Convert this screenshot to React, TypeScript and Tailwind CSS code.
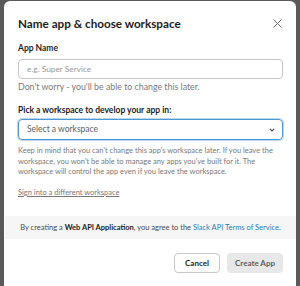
export default function App() {
  return (
    <div className="h-[286px] w-[300px] overflow-hidden bg-[#5a5a5a] pl-[4px] pr-[4px] pt-px font-['Lato','Noto_Sans',sans-serif] text-[#1d1c1d]">
      <div className="h-[320px] rounded-t-[6px] bg-white">
        {/* Header */}
        <div className="flex items-center justify-between pl-[14px] pr-[14px] pt-[12px]">
          <h1 className="text-[11.7px] font-bold leading-[20px]">Name app &amp; choose workspace</h1>
          <button className="text-[#6b6b6b]">
            <svg width="9" height="9" viewBox="0 0 9 9" fill="none" stroke="currentColor" strokeWidth="1">
              <path d="M0.5 0.5l8 8M8.5 0.5l-8 8" />
            </svg>
          </button>
        </div>

        {/* Body */}
        <div className="pl-[14px] pr-[13px]">
          <label className="mt-[7px] block text-[8.5px] font-bold leading-[16px]">App Name</label>
          <input
            placeholder="e.g. Super Service"
            className="mt-[3px] block h-[20px] w-full rounded-[4px] border border-[#c6c6c6] px-[8px] text-[8.3px] placeholder:text-[#9a9a9a] outline-none"
          />
          <p className="mt-[2px] text-[8.8px] leading-[12px] text-[#7a797a]">Don't worry - you'll be able to change this later.</p>

          <label className="mt-[9px] block text-[8.5px] font-bold leading-[16px]">Pick a workspace to develop your app in:</label>
          <div className="mt-px flex h-[21px] items-center justify-between rounded-[4px] border border-[#4d97d3] px-[8px] shadow-[0_0_0_1px_#b9d7ee]">
            <span className="text-[8.5px] text-[#616061]">Select a workspace</span>
            <svg width="6" height="4" viewBox="0 0 6 4" fill="none" stroke="#555" strokeWidth="1.1" className="mr-[-1px]">
              <path d="M1 1l2 2 2-2" />
            </svg>
          </div>
          <p className="mt-[6px] text-[7.5px] leading-[10.6px] text-[#7a797a]">
            Keep in mind that you can't change this app's workspace later. If you leave the workspace, you won't be able to manage any apps you've built for it. The workspace will control the app even if you leave the workspace.
          </p>
          <a className="mt-[9px] block text-[7.5px] leading-[12px] text-[#7a797a] underline">Sign into a different workspace</a>
        </div>

        {/* Footer note */}
        <div className="mt-[17px] ml-px flex h-[23px] items-center justify-center bg-[#f6f6f6] text-[7.5px] text-[#4a4a4a]">
          <span>
            By creating a <b className="text-[#1d1c1d]">Web API Application</b>, you agree to the{" "}
            <a className="text-[#2a7ec1]">Slack API Terms of Service</a>.
          </span>
        </div>

        {/* Actions */}
        <div className="mt-[14px] flex justify-end gap-[7px] pr-[13px]">
          <button className="h-[20px] w-[46px] rounded-[4px] border border-[#c6c6c6] bg-white text-[8px] font-bold">Cancel</button>
          <button className="h-[20px] w-[56px] rounded-[4px] bg-[#e8e8e8] text-[8px] font-bold text-[#5e5e5e]">Create App</button>
        </div>
      </div>
    </div>
  );
}
